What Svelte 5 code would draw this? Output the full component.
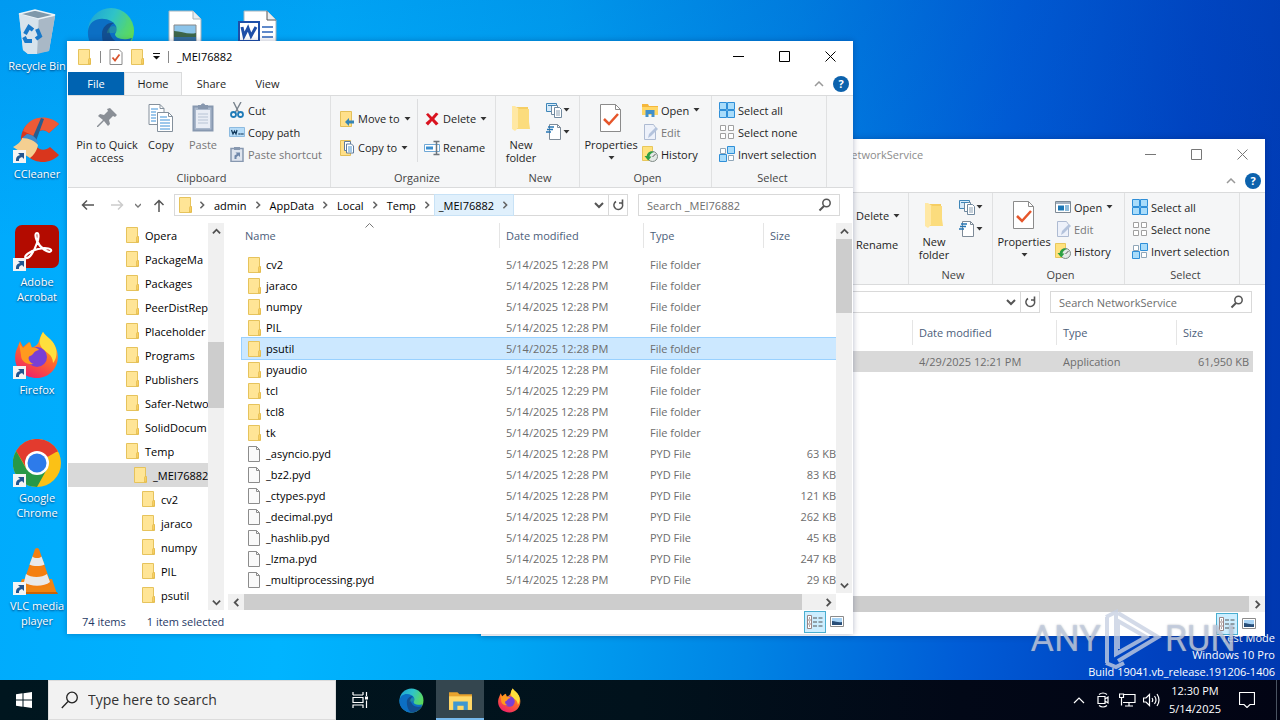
<script>
  const shortcuts = [
    { icon: 'bin', label: 'Recycle Bin', badge: false },
    { icon: 'ccleaner', label: 'CCleaner', badge: true },
    { icon: 'acrobat', label: 'Adobe Acrobat', badge: true },
    { icon: 'firefox', label: 'Firefox', badge: true },
    { icon: 'chrome', label: 'Google Chrome', badge: true },
    { icon: 'vlc', label: 'VLC media player', badge: true }
  ];
  const tree = [
    ['Opera', 0], ['PackageMa', 0], ['Packages', 0], ['PeerDistRep', 0],
    ['Placeholder', 0], ['Programs', 0], ['Publishers', 0], ['Safer-Netwo', 0],
    ['SolidDocum', 0], ['Temp', 0], ['_MEI76882', 1], ['cv2', 2], ['jaraco', 2],
    ['numpy', 2], ['PIL', 2], ['psutil', 2]
  ];
  const d28 = '5/14/2025 12:28 PM';
  const d29 = '5/14/2025 12:29 PM';
  const folder = (name, date = d28) => ({ name, date, type: 'File folder', size: '', icon: 'folder' });
  const pyd = (name, size) => ({ name, date: d28, type: 'PYD File', size, icon: 'file' });
  const mainFiles = [
    folder('cv2'), folder('jaraco'), folder('numpy'), folder('PIL'), folder('psutil'),
    folder('pyaudio'), folder('tcl', d29), folder('tcl8'), folder('tk', d29),
    pyd('_asyncio.pyd', '63 KB'), pyd('_bz2.pyd', '83 KB'), pyd('_ctypes.pyd', '121 KB'),
    pyd('_decimal.pyd', '262 KB'), pyd('_hashlib.pyd', '45 KB'), pyd('_lzma.pyd', '247 KB'),
    pyd('_multiprocessing.pyd', '29 KB'), { name: '', date: '', type: '', size: '', icon: 'file' }
  ];
  const backFiles = [{ name: '', date: '4/29/2025 12:21 PM', type: 'Application', size: '61,950 KB', icon: '' }];
  const crumbs = ['admin', 'AppData', 'Local', 'Temp', '_MEI76882'];
</script>

{#snippet icon(name)}
  {#if name === 'folder'}
    <svg width="14" height="16" viewBox="0 0 14 16"><path d="M.5.5h11v9h1v6H.5z" fill="#ffe596" stroke="#e6c35c" /><path d="M10.500 15V10.500l1-1.500 1 1.500V15z" fill="#f8cf62" stroke="#dfb544" stroke-width=".6" /></svg>
  {:else if name === 'file'}
    <svg width="14" height="16" viewBox="0 0 14 16"><path d="M.5.5h8l3 3v12H.5z" fill="#fafafa" stroke="#8c8c8c" /><path d="M8.500.5v3h3" fill="none" stroke="#8c8c8c" /></svg>
  {:else if name === 'propsmall'}
    <svg width="14" height="16" viewBox="0 0 14 16"><path d="M1 .5h9l3 3v12H1z" fill="#fff" stroke="#8a8a8a" /><path d="m3.500 8.500 2.500 3 4.500-6" fill="none" stroke="#d9532c" stroke-width="1.800" /></svg>
  {:else if name === 'caret'}
    <svg class="caret" width="7" height="4" viewBox="0 0 7 4"><path d="M.5 0h6l-3 3.500z" fill="#333" /></svg>
  {:else if name === 'pin'}
    <svg width="24" height="32" viewBox="0 0 24 32"><path d="M15 6l7 7-2 2-2-1-4 4 1 4-2 2-4-5-6 6-1 0 0-1 6-6-5-4 2-2 4 1 4-4-1-2z" fill="#8a8f96" /></svg>
  {:else if name === 'copy'}
    <svg width="26" height="32" viewBox="0 0 26 32"><g fill="#fff" stroke="#84909c"><path d="M1 2.500h11l4 4v16H1z" /><path d="M9.500 10.500h11l4 4v15h-15z" /><path d="M12 2.500v4h4M20.500 10.500v4h4" fill="none" /></g><path d="M3 7h7M3 10h5M3 13h5M3 16h5M3 19h5M12 15h7M12 18h10M12 21h10M12 24h10M12 27h10" stroke="#3c91d8" /></svg>
  {:else if name === 'paste'}
    <svg width="22" height="32" viewBox="0 0 22 32"><path d="M1.500 4.500h19v24h-19z" fill="#aab8cc" stroke="#8798b0" stroke-width="2" /><path d="M4 8h14v18H4z" fill="#e9edf5" /><path d="M6 3h3c0-2 4-2 4 0h3v4H6z" fill="#8797ae" /><path d="M6 12h10M6 15h10M6 18h10M6 21h10" stroke="#b7c3d4" /></svg>
  {:else if name === 'cut'}
    <svg width="16" height="16" viewBox="0 0 16 16"><path d="m4.500 0 5.500 11M12 0 6 11" stroke="#78838d" stroke-width="1.400" /><g fill="none" stroke="#1f7bb8" stroke-width="1.800"><circle cx="4.500" cy="12.500" r="2.500" /><circle cx="11.500" cy="12.500" r="2.500" /></g></svg>
  {:else if name === 'path'}
    <svg width="16" height="16" viewBox="0 0 16 16"><path d="M.5 3.500h15v9H.5z" fill="#b6dcf8" stroke="#8dbbe0" /><path d="m2.500 6 1.500 4L5.500 7 7 10l1-4" fill="none" stroke="#12395c" stroke-width="1.200" /><path d="M9.500 10h1.200M11.500 10h1.200M13.300 10h1.200" stroke="#12395c" stroke-width="1.500" /></svg>
  {:else if name === 'pasteshort'}
    <svg width="16" height="16" viewBox="0 0 16 16"><path d="M2 2.500h12v13H2z" fill="#dfe5ef" stroke="#8798b0" stroke-width="1.500" /><path d="M5 1h6v3H5z" fill="#8798b0" /><path d="M5.500 13V9.500L8 8 6.500 6.500H11V11L9.500 9.500 7.500 11v2z" fill="#6f87aa" /></svg>
  {:else if name === 'moveto'}
    <svg width="16" height="16" viewBox="0 0 16 16"><path d="M1.500.5h11v15h-11z" fill="#ffe08a" stroke="#e3bf58" /><path d="m6 11 4-4v2.500h5v3h-5V15z" fill="#3685b5" /></svg>
  {:else if name === 'copyto'}
    <svg width="16" height="16" viewBox="0 0 16 16"><path d="M1.500.5h10v15h-10z" fill="#ffe08a" stroke="#e3bf58" /><g fill="#fff" stroke="#607c9c"><path d="M5.500 1.500h6v9h-6z" /><path d="M7.500 4h5l2 2v7h-7z" /></g><path d="M9 7h4M9 9h4M9 11h4" stroke="#4a93cf" /></svg>
  {:else if name === 'delete'}
    <svg width="16" height="16" viewBox="0 0 16 16"><path d="M2 3.500 4 2l4 4 4-4.500L14.500 3l-4.300 5 4.300 4.500L12 14.500 8 10l-4 4.500L1.500 12 6 8z" fill="#d9131f" /></svg>
  {:else if name === 'rename'}
    <svg width="16" height="16" viewBox="0 0 16 16"><path d="M.5 4.500h15v7H.5z" fill="#fff" stroke="#6fa8d6" /><path d="M2 6.500h7v3H2z" fill="#3b8fd0" /><path d="M9.500 1.500h6M12.500 1.500v13M9.500 14.500h6" stroke="#6d747b" stroke-width="1.500" /></svg>
  {:else if name === 'newfolder'}
    <svg width="22" height="32" viewBox="0 0 22 32"><path d="M3 5h15v22H5z" fill="#f6ce63" /><path d="M2 4h3l4 3v18l-4 4-3-2z" fill="#ffe8a4" /><path d="M8 7h11v13l1 7H8z" fill="#fbdc7d" /></svg>
  {:else if name === 'newitem'}
    <svg width="17" height="16" viewBox="0 0 17 16"><g fill="#fff" stroke="#70899f"><path d="M.5 1.500h10v8H.5z" fill="#d7ebfa" stroke="#3f86b8" /><path d="M5.500 3.500h6v9h-6z" /><path d="M8.500 5.500h5l2 2v8h-7z" /></g><path d="M2 3.500h7" stroke="#3f86b8" /><path d="M10 9h4M10 11h4M10 13h4" stroke="#8ba0b2" /></svg>
  {:else if name === 'easy'}
    <svg width="17" height="16" viewBox="0 0 17 16"><path d="M3.500.5h8l3 3v12h-11z" fill="#fff" stroke="#7e8b98" /><path d="M11.500.5v3h3" fill="none" stroke="#7e8b98" /><path d="M2 3h6M1 5.500h6M0 8h5" stroke="#2777b5" stroke-width="1.400" /></svg>
  {:else if name === 'properties'}
    <svg width="24" height="32" viewBox="0 0 24 32"><path d="M1.500 2.500h15l5 5v22h-20z" fill="#fff" stroke="#8b8b8b" /><path d="M16.500 2.500v5h5" fill="none" stroke="#8b8b8b" /><path d="m5 17 5 5 9-10" fill="none" stroke="#e6562b" stroke-width="2.500" /></svg>
  {:else if name === 'open'}
    <svg width="16" height="16" viewBox="0 0 16 16"><path d="M0 2h6l1 2h9v9H0z" fill="#f5b73c" /><path d="M0 5h16v8H0z" fill="#ffd766" /><path d="M3.500 8h9v7h-3v-3h-3v3h-3z" fill="#418fcb" /></svg>
  {:else if name === 'openapp'}
    <svg width="16" height="16" viewBox="0 0 16 16"><path d="M.5 2.500h15v11H.5z" fill="#fff" stroke="#7d8994" /><path d="M1 3h14v2H1z" fill="#a6b4c2" /><path d="M3 6.500h6v5H3z" fill="#1c78b6" /><path d="M10 7h4M10 9h4M10 11h4" stroke="#1c78b6" /></svg>
  {:else if name === 'edit'}
    <svg width="16" height="16" viewBox="0 0 16 16"><path d="M2.500.5h9l2 3v12h-11z" fill="#edf1fa" stroke="#aebbd2" /><path d="m6 14 1-4 7-7 2 2-7 7z" fill="#b4c3dc" /></svg>
  {:else if name === 'history'}
    <svg width="16" height="16" viewBox="0 0 16 16"><path d="M.5.5h10v14H.5z" fill="#ffe27e" stroke="#e8c75c" /><circle cx="10.500" cy="10.500" r="5" fill="#e4e9e6" stroke="#7f8a86" /><path d="M12 6c-4-1.500-7 1-7.300 4H2.500l3.700 4.500 3.300-4H7.500c.3-2 2-3.800 4.500-4.500z" fill="#2da043" /><path d="m10.500 11 3-3" stroke="#555" /></svg>
  {:else if name === 'selall'}
    <svg width="16" height="16" viewBox="0 0 16 16"><g fill="#a9dcfa" stroke="#2f8fd8"><path d="M.5.5h7v7h-7zM8.500.5h7v7h-7zM.5 8.500h7v7h-7zM8.500 8.500h7v7h-7z" /></g></svg>
  {:else if name === 'selnone'}
    <svg width="16" height="16" viewBox="0 0 16 16"><path d="M1.500 1.500h5v5h-5zM9.500 1.500h5v5h-5zM1.500 9.500h5v5h-5zM9.500 9.500h5v5h-5z" fill="#fff" stroke="#a0a0a0" /></svg>
  {:else if name === 'selinv'}
    <svg width="16" height="16" viewBox="0 0 16 16"><path d="M1.500 2.500h5v5h-5zM9.500 9.500h5v5h-5z" fill="#fff" stroke="#8fa6b8" /><path d="M8.500.5h7v7h-7zM.5 8.500h7v7h-7z" fill="#a9dcfa" stroke="#2f8fd8" /></svg>
  {:else if name === 'edge'}
    <svg viewBox="0 0 48 48"><circle cx="24" cy="24" r="23" fill="url(#edgeTop)" /><path d="M1 24C2 12 15 9 24 14c6 3 7 9 4 13 0 4 7 7 17 4C39 44 27 50 16 46 6 42 0 34 1 24z" fill="#0c6fc4" /><path d="M15 27c0-7 6-12 12-11-5 2-6 8-3 13 4 8 14 9 21 5-6 11-17 14-23 12-5-4-7-12-7-19z" fill="#124f91" /><path d="M20 27c0-5 3-8 7-8 4 1 4 6 1 8 0 4 8 6 17 3 4-13-5-22-11-25 9 7 6 20-8 21-3 0-6-1-6 1z" fill="#54d870" opacity=".25" /></svg>
  {:else if name === 'firefox'}
    <svg viewBox="0 0 48 48"><path d="M30 1c3 5 9 7 12 14 8 15-2 32-18 32C9 47-1 35 3 20l4-10 3 6 6-5 2 6c3-1 7-3 8-7 1-3 2-6 4-9z" fill="url(#foxBody)" /><path d="M30 1c3 5 9 7 12 14 3 7 1 14-2 17 0-9-8-11-11-15-4-5-2-11 1-16z" fill="#ffdf3c" /><circle cx="24" cy="26" r="10" fill="#7a3fd4" /><path d="M6 12l4 5 7-6 2 6c2-1 6 0 7 2-6 1-5 5-9 6-3 1-1 7 4 8-8 1-13-3-13-9z" fill="#ff9a1f" /></svg>
  {:else if name === 'bin'}
    <svg viewBox="0 0 48 48"><path d="m6 7 36 2-6 35-21 3-5-4z" fill="#c7d6e2" /><path d="m26 11 16-2-6 35-12 3z" fill="#a9b8c6" /><path d="m6 7 16-4 20 5-17 4z" fill="#7f98aa" stroke="#edf4f8" stroke-width="1.500" /><path d="m6 7 19 5-1 35-9 0-5-4z" fill="#d7e3ec" /><g fill="none" stroke="#1979c9" stroke-width="4"><path d="m12 27 4-7 4 3M24 22l3 7-4 3M19 34h-6l-2-4" /></g></svg>
  {:else if name === 'ccleaner'}
    <svg viewBox="0 0 48 48"><path d="M46 9 36 18c-6-6-15-1-15 7s9 13 16 7l9 8C33 54 8 46 8 25S32-3 46 9z" fill="#d9361d" /><path d="M46 9 36 18c-6-6-13-2-15 3L10 16C16 0 36-1 46 9z" fill="#ee5a36" /><path d="m28 3 3 1-8 22-4-2z" fill="#275d8f" /><path d="M14 19c5 0 10 4 11 9l-7 3-9-8z" fill="#3b8bcf" /><path d="M9 23c7 0 13 3 16 7-1 6-5 11-8 13L0 32c4-2 8-5 9-9z" fill="#f4cf91" /></svg>
  {:else if name === 'acrobat'}
    <svg viewBox="0 0 48 48"><rect x="2" y="2" width="44" height="43" rx="7" fill="#b30b00" /><path d="M13 35c-3-1 3-7 12-9 9-2 14 0 13 2-2 3-11-3-14-10-2-4-2-8 0-8s2 5 0 10c-3 9-8 16-11 15z" fill="none" stroke="#fff" stroke-width="2.200" /></svg>
  {:else if name === 'chrome'}
    <svg viewBox="0 0 48 48"><circle cx="24" cy="24" r="24" fill="#fbc116" /><path d="M24 24 3.200 12A24 24 0 0 1 44.800 12z" fill="#e33b2e" /><path d="M24 13h20.800A24 24 0 0 0 3.200 12L14 30z" fill="#e33b2e" /><path d="M3.200 12A24 24 0 0 0 24 48l10-18-20 1z" fill="#279847" /><circle cx="24" cy="24" r="12" fill="#fff" /><circle cx="24" cy="24" r="9.500" fill="#2d7bea" /></svg>
  {:else if name === 'vlc'}
    <svg viewBox="0 0 48 48"><path d="M9 32h30l5 15H3z" fill="#f08412" /><path d="M3 45h41l1 2H2z" fill="#cc6305" /><path d="M22 2q2-2 4 0l12 35c-4 5-24 5-28 0z" fill="#f47f10" /><path d="m19.500 9.500-3 8c4 2 11 2 15 0l-3-8c-2 2-7 2-9 0zM13 27l-2 8c6 5 20 5 26 0l-3-8c-5 4-16 4-21 0z" fill="#e9e9e9" /></svg>
  {:else if name === 'details'}
    <svg width="16" height="14" viewBox="0 0 16 14"><path d="M.5.5h4v13h-4zM.5 5h4M.5 9h4" fill="#fff" stroke="#9a8484" /><path d="M6 3h4M11.500 3h4M6 7h4M11.500 7h4M6 11h4M11.500 11h4M2 3h1M2 7h1M2 11h1" stroke="#555" /></svg>
  {:else if name === 'thumbs'}
    <svg width="14" height="11" viewBox="0 0 14 11"><path d="M.5.5h13v10H.5z" fill="#fff" stroke="#8b8b8b" /><path d="M2 2h10v7H2z" fill="#a7d3f5" /><path d="M2 5c4 0 6 2 10 1v3H2z" fill="#284e78" /></svg>
  {:else if name === 'magnify'}
    <svg width="14" height="14" viewBox="0 0 14 14"><circle cx="8.500" cy="5" r="3.700" fill="none" stroke="#555" stroke-width="1.500" /><path d="M6 8 1.500 12.500" stroke="#555" stroke-width="2" /></svg>
  {/if}
{/snippet}

{#snippet chev(dir)}
  <svg class="chev {dir}" width="10" height="10" viewBox="0 0 10 10"><path d="m1 3 4 4 4-4" fill="none" stroke="currentColor" stroke-width="2" /></svg>
{/snippet}

{#snippet small(ic, label, caret, off)}
  <button class="small" class:off>{@render icon(ic)}<span>{label}</span>{#if caret}{@render icon('caret')}{/if}</button>
{/snippet}

{#snippet big(ic, label, cls)}
  <button class="big {cls}">{@render icon(ic)}<span>{label}</span></button>
{/snippet}

{#snippet ribbonEnd(app)}
  <section class="group new">
    <div class="tools">
      {@render big('newfolder', 'New folder', 'w-copy')}
      <div class="stack">
        <button class="small tight" aria-label="New item">{@render icon('newitem')}{@render icon('caret')}</button>
        <button class="small tight" aria-label="Easy access">{@render icon('easy')}{@render icon('caret')}</button>
      </div>
    </div>
    <h2>New</h2>
  </section>
  <section class="group opening">
    <div class="tools">
      <button class="big w-prop">{@render icon('properties')}<span>Properties</span>{@render icon('caret')}</button>
      <div class="stack">
        {@render small(app ? 'openapp' : 'open', 'Open', true)}
        {@render small('edit', 'Edit', false, true)}
        {@render small('history', 'History')}
      </div>
    </div>
    <h2>Open</h2>
  </section>
  <section class="group select">
    <div class="tools">
      <div class="stack">
        {@render small('selall', 'Select all')}
        {@render small('selnone', 'Select none')}
        {@render small('selinv', 'Invert selection')}
      </div>
    </div>
    <h2>Select</h2>
  </section>
{/snippet}

{#snippet tabEnd()}
  <span class="grow"></span>
  <button class="fold" aria-label="Minimize the Ribbon"><svg width="10" height="6" viewBox="0 0 10 6"><path d="m1 5 4-4 4 4" fill="none" stroke="#999" stroke-width="1.500" /></svg></button>
  <button class="help" aria-label="Help">?</button>
{/snippet}

{#snippet controls()}
  <div class="controls">
    <button aria-label="Minimize"><svg width="11" height="11" viewBox="0 0 11 11"><path d="M0 5.500h11" stroke="currentColor" /></svg></button>
    <button aria-label="Maximize"><svg width="11" height="11" viewBox="0 0 11 11"><path d="M.5.5h10v10H.5z" fill="none" stroke="currentColor" /></svg></button>
    <button aria-label="Close"><svg width="11" height="11" viewBox="0 0 11 11"><path d="m.5.5 10 10M10.500.5l-10 10" stroke="currentColor" /></svg></button>
  </div>
{/snippet}

{#snippet address(parts, hint)}
  <div class="address">
    <div class="arrows">
      <button aria-label="Back" class="prev"><svg width="13" height="12" viewBox="0 0 13 12"><path d="M13 6H1.500M6 1.500 1.500 6 6 10.500" fill="none" stroke="#555" stroke-width="1.500" /></svg></button>
      <button aria-label="Forward"><svg width="13" height="12" viewBox="0 0 13 12"><path d="M0 6h11.500M7 1.500 11.500 6 7 10.500" fill="none" stroke="#ccc" stroke-width="1.500" /></svg></button>
      <button aria-label="Recent locations" class="recent"><svg width="6" height="5" viewBox="0 0 6 5"><path d="m0 1 3 3 3-3" fill="none" stroke="#777" stroke-width="1.300" /></svg></button>
      <button aria-label="Up"><svg width="12" height="13" viewBox="0 0 12 13"><path d="M6 13V1.500M1.500 6 6 1.500 10.500 6" fill="none" stroke="#555" stroke-width="1.500" /></svg></button>
    </div>
    <div class="path">
      {#if parts.length}
        <span class="root">{@render icon('folder')}</span>
        <span class="sep">{@render chev('right')}</span>
      {/if}
      {#each parts as part, i}
        <button class="crumb" class:last={i === parts.length - 1}>{part}<span class="sep">{@render chev('right')}</span></button>
      {/each}
      <span class="grow"></span>
      <button class="drop" aria-label="Previous locations">{@render chev('down')}</button>
      <button class="reload" aria-label="Refresh"><svg width="11" height="12" viewBox="0 0 11 12"><path d="M3 2.500A4.300 4.300 0 1 0 9 4M6 4h3.500V.5" fill="none" stroke="#555" stroke-width="1.600" /></svg></button>
    </div>
    <label class="find"><input type="text" placeholder={hint} aria-label={hint} />{@render icon('magnify')}</label>
  </div>
{/snippet}

{#snippet listing(files, selected, first)}
  <table>
    <colgroup><col /><col class="c-date" /><col class="c-type" /><col class="c-size" /></colgroup>
    <thead><tr><th><div>{first}</div></th><th><div>Date modified</div></th><th><div>Type</div></th><th><div>Size</div></th></tr></thead>
    <tbody>
      {#each files as f, i}
        <tr class:selected={i === selected}>
          <td><span class="name">{#if f.icon}{@render icon(f.icon)}{/if}{f.name}</span></td>
          <td>{f.date}</td><td>{f.type}</td><td class="size">{f.size}</td>
        </tr>
      {/each}
    </tbody>
  </table>
{/snippet}

{#snippet views()}
  <div class="views">
    <button class="on" aria-label="Details">{@render icon('details')}</button>
    <button aria-label="Large icons">{@render icon('thumbs')}</button>
  </div>
{/snippet}

<svg class="defs" width="0" height="0" aria-hidden="true">
  <defs>
    <linearGradient id="edgeTop" x1="0" y1="0" x2="1" y2=".5"><stop offset="0" stop-color="#1aa0d8" /><stop offset=".5" stop-color="#2fc3c8" /><stop offset="1" stop-color="#5fdc55" /></linearGradient>
    <linearGradient id="foxBody" x1=".8" y1="0" x2=".3" y2="1"><stop offset="0" stop-color="#ffc42e" /><stop offset=".5" stop-color="#ff6a2a" /><stop offset="1" stop-color="#f0206a" /></linearGradient>
  </defs>
</svg>

<div class="screen">
  <main class="desktop">
    <div class="icons">
      <div class="column">
        {#each shortcuts as s}
          <button class="shortcut">
            <span class="pic">{@render icon(s.icon)}{#if s.badge}<svg class="badge" width="13" height="13" viewBox="0 0 13 13"><path d="M0 0h13v13H0z" fill="#f4f4f4" /><path d="M3 11c0-4 1-5 4-6L5 3h6v6L9 7c-3 1-3 2-3 4z" fill="#22558f" /></svg>{/if}</span>
            <span class="label">{s.label}</span>
          </button>
        {/each}
      </div>
      <div class="column"><button class="shortcut" aria-label="Edge"><span class="pic">{@render icon('edge')}</span></button></div>
      <div class="column"><button class="shortcut" aria-label="Picture"><span class="pic"><svg viewBox="0 0 48 48"><path d="M8 4h24l8 8v34H8z" fill="#fff" stroke="#a8b4bc" /><path d="M32 4v8h8" fill="#e8edf0" stroke="#a8b4bc" /><path d="M13 18h22v17H13z" fill="#8cc4ea" stroke="#888" /><path d="M13 24c7 0 14 4 22 2v4H13z" fill="#3e6549" /><path d="M13 30h22v5H13z" fill="#356d9c" /></svg></span></button></div>
      <div class="column"><button class="shortcut" aria-label="Document"><span class="pic"><svg viewBox="0 0 48 48"><path d="M9 4h23l9 9v33H9z" fill="#fff" stroke="#a8b4bc" /><path d="M32 4v9h9" fill="#e8edf0" stroke="#555" /><path d="M27 20h11M27 25h11M27 30h11" stroke="#2b63b8" stroke-width="1.500" /><path d="M4 15h20v19H4z" fill="#fff" stroke="#1e4fa8" stroke-width="2" /><path d="m7 20 2 9 4-8 3 8 5-9" fill="none" stroke="#1e4fa8" stroke-width="3" /></svg></span></button></div>
    </div>

    <div class="build"><span>Test Mode</span><span>Windows 10 Pro</span><span>Build 19041.vb_release.191206-1406</span></div>

    <article class="window back">
      <header class="title"><span class="grow"></span><h1>NetworkService</h1>{@render controls()}</header>
      <div class="tabs">{@render tabEnd()}</div>
      <div class="ribbon">
        <section class="group rest">
          <div class="tools">
            <div class="stack tall">
              {@render small('delete', 'Delete', true)}
              {@render small('rename', 'Rename')}
            </div>
          </div>
        </section>
        {@render ribbonEnd(true)}
      </div>
      {@render address([], 'Search NetworkService')}
      <div class="body">
        <div class="nav"></div>
        <div class="list">
          <div class="view-area">{@render listing(backFiles, 0, '')}</div>
          <div class="hbar"><span class="arrow">{@render chev('left')}</span><span class="thumb"></span><span class="arrow">{@render chev('right')}</span></div>
        </div>
      </div>
      <footer class="status"><span class="grow"></span>{@render views()}</footer>
    </article>

    <article class="window front">
      <header class="title">
        <span class="quick">{@render icon('folder')}<i></i>{@render icon('propsmall')}{@render icon('folder')}<svg width="7" height="7" viewBox="0 0 7 7"><path d="M0 .5h7" stroke="#111" /><path d="M0 3h7L3.500 6.500z" fill="#111" /></svg><i></i></span>
        <h1>_MEI76882</h1>
        {@render controls()}
      </header>
      <div class="tabs">
        <button class="tab file">File</button>
        <button class="tab home">Home</button>
        <button class="tab share">Share</button>
        <button class="tab view">View</button>
        {@render tabEnd()}
      </div>
      <div class="ribbon">
        <section class="group clip">
          <div class="tools">
            {@render big('pin', 'Pin to Quick access', 'w-pin')}
            {@render big('copy', 'Copy', 'w-copy')}
            {@render big('paste', 'Paste', 'w-paste off')}
            <div class="stack">
              {@render small('cut', 'Cut')}
              {@render small('path', 'Copy path')}
              {@render small('pasteshort', 'Paste shortcut', false, true)}
            </div>
          </div>
          <h2>Clipboard</h2>
        </section>
        <section class="group organize">
          <div class="tools">
            <div class="stack tall">
              {@render small('moveto', 'Move to', true)}
              {@render small('copyto', 'Copy to', true)}
            </div>
            <div class="stack tall divided">
              {@render small('delete', 'Delete', true)}
              {@render small('rename', 'Rename')}
            </div>
          </div>
          <h2>Organize</h2>
        </section>
        {@render ribbonEnd(false)}
      </div>
      {@render address(crumbs, 'Search _MEI76882')}
      <div class="body">
        <nav class="nav">
          <ul>
            {#each tree as [name, level]}
              <li class="l{level}" class:current={name === '_MEI76882'}>{@render icon('folder')}<span>{name}</span></li>
            {/each}
          </ul>
          <div class="vbar"><span class="arrow">{@render chev('up')}</span><span class="track nav-track"><span class="thumb"></span></span><span class="arrow">{@render chev('down')}</span></div>
        </nav>
        <div class="list">
          <div class="view-row">
            <div class="view-area">
              {@render listing(mainFiles, 4, 'Name')}
              <svg class="sort" width="9" height="5" viewBox="0 0 9 5"><path d="m.5 4.500 4-4 4 4" fill="none" stroke="#777" /></svg>
            </div>
            <div class="vbar"><span class="arrow">{@render chev('up')}</span><span class="track list-track"><span class="thumb"></span></span><span class="arrow">{@render chev('down')}</span></div>
          </div>
          <div class="hbar"><span class="arrow">{@render chev('left')}</span><span class="thumb"></span><span class="rest"></span><span class="arrow">{@render chev('right')}</span></div>
        </div>
      </div>
      <footer class="status"><span>74 items</span><span>1 item selected</span><span class="grow"></span>{@render views()}</footer>
    </article>

    <div class="watermark">
      <span>ANY</span>
      <svg width="58" height="62" viewBox="0 0 58 62"><path d="M14 5 54 29 14 53M3 9v46M2 9l10-5v42l30-17L14 13v28M2 55l10 4 8-4" fill="none" stroke="currentColor" stroke-width="4" /></svg>
      <span>RUN</span>
    </div>
  </main>

  <footer class="taskbar">
    <button class="start" aria-label="Start"><svg width="16" height="16" viewBox="0 0 16 16"><path d="M0 2.200 6.500 1.300v6.200H0zM7.500 1.200 16 0v7.500H7.500zM0 8.500h6.500v6.200L0 13.800zM7.500 8.500H16V16l-8.500-1.200z" fill="#fff" /></svg></button>
    <label class="search"><svg width="18" height="18" viewBox="0 0 18 18"><circle cx="11" cy="6.500" r="5.300" fill="none" stroke="#222" stroke-width="1.300" /><path d="M7 10.500.8 17" stroke="#222" stroke-width="1.300" /></svg><input type="text" placeholder="Type here to search" aria-label="Type here to search" /></label>
    <button class="task view-task" aria-label="Task View"><svg width="17" height="16" viewBox="0 0 17 16"><path d="M1 0v3M11 0v3M1 3h10M1 5.500h10v5H1zM1 16v-3h10v3M14.500 0v4M14.500 8.500V16" fill="none" stroke="#fff" stroke-width="1.200" /><path d="M13 4.500h3v3h-3z" fill="#fff" /></svg></button>
    <button class="task" aria-label="Edge">{@render icon('edge')}</button>
    <button class="task active" aria-label="File Explorer"><svg viewBox="0 0 24 24"><path d="M1 4h8l2 2h12v15H1z" fill="#e8a32d" /><path d="M1 8h22v13H1z" fill="#ffd868" /><path d="M5 13h14v8h-4v-4H9v4H5z" fill="#3f97d0" /></svg></button>
    <button class="task" aria-label="Firefox">{@render icon('firefox')}</button>
    <span class="grow"></span>
    <div class="tray">
      <button aria-label="Show hidden icons"><svg width="12" height="7" viewBox="0 0 12 7"><path d="m1 6 5-5 5 5" fill="none" stroke="#fff" stroke-width="1.200" /></svg></button>
      <button aria-label="Meet Now"><svg width="12" height="16" viewBox="0 0 12 16"><path d="M1 4.500h7v7H1zM8 7l3-2v6L8 9M2 2.500q4-3 8 0M2 13.500q4 3 8 0" fill="none" stroke="#fff" stroke-width="1.200" /></svg></button>
      <button aria-label="Network"><svg width="17" height="14" viewBox="0 0 17 14"><path d="M5 1.500h11v8H4M10 9.500V13M6 13h8M.5 1h4v3.500h-4zM2.500 5v7.500" fill="none" stroke="#fff" stroke-width="1.200" /></svg></button>
      <button aria-label="Volume"><svg width="17" height="14" viewBox="0 0 17 14"><path d="M.5 5h2.500l3.500-3.500v11L3 9H.5zM9 5q1.500 2 0 4M11.500 3q3 4 0 8M14 1q4 6 0 12" fill="none" stroke="#fff" stroke-width="1.200" /></svg></button>
    </div>
    <div class="clock"><span>12:30 PM</span><span>5/14/2025</span></div>
    <button class="notes" aria-label="Notifications"><svg width="16" height="16" viewBox="0 0 16 16"><path d="M.5.5h15v12H11L8 15.500 5 12.500H.5z" fill="none" stroke="#fff" stroke-width="1.200" /></svg></button>
  </footer>
</div>

<style>
  :global(body) { margin: 0; }
  .defs { position: absolute; }
  .screen { display: flex; flex-direction: column; height: 100vh; min-height: 480px; overflow: hidden; font: 11px/15px "Open Sans", "Noto Sans", sans-serif; color: #1e1e1e; }
  .screen * { box-sizing: border-box; }
  button { font: inherit; color: inherit; background: none; border: 0; padding: 0; margin: 0; }
  input { font: inherit; color: inherit; background: none; border: 0; padding: 0; margin: 0; min-width: 0; outline: 0; }
  h1, h2, ul { margin: 0; padding: 0; font: inherit; list-style: none; }
  svg { display: block; flex: none; }
  .grow { flex: 1; }

  .desktop { position: relative; flex: 1; min-height: 0; background: linear-gradient(180deg, rgba(0, 80, 190, .18), rgba(0, 80, 190, 0) 35%), linear-gradient(95deg, #00aafc 0, #00b4ff 25%, #00a6f4 42%, #0084e4 60%, #005cd6 76%, #0042c0 90%, #0038b0 100%); }
  .icons { display: flex; }
  .column { display: flex; flex-direction: column; width: 74px; }
  .shortcut { display: flex; flex-direction: column; align-items: center; height: 108px; padding: 7px 4px 0; color: #fff; }
  .column:first-child .shortcut { padding: 7px 0 0; }
  .pic { position: relative; width: 48px; height: 48px; margin-bottom: 3px; }
  .pic > :global(svg) { width: 48px; height: 48px; }
  .pic > .badge { position: absolute; left: 0; bottom: 0; width: 13px; height: 13px; }
  .label { padding: 0 6px; text-shadow: 0 1px 2px rgba(0, 30, 80, .8); }

  .build { position: absolute; right: 5px; bottom: 0; display: flex; flex-direction: column; text-align: right; line-height: 17px; color: #fff; }
  .watermark { position: absolute; right: 44px; bottom: 10px; display: flex; align-items: center; gap: 3px; font: 36px/60px "Liberation Sans Narrow", Roboto, sans-serif; color: rgba(198, 208, 226, .78); text-shadow: 0 0 2px rgba(90, 100, 120, .5); pointer-events: none; }

  .window { position: absolute; display: flex; flex-direction: column; background: #fff; box-shadow: 0 0 6px rgba(0, 20, 70, .3); }
  .front { left: 67px; top: 41px; bottom: 46px; width: min(786px, 100vw - 67px); padding-left: 1px; }
  .back { right: 15px; top: 139px; bottom: 44px; width: min(784px, 100vw - 15px); }
  .title { display: flex; align-items: center; height: 31px; flex: none; }
  .back .title { height: 30px; }
  .quick { display: flex; align-items: center; gap: 8px; width: 109px; padding-left: 10px; }
  .quick i { width: 1px; height: 12px; background: #888; }
  .title h1 { color: #000; }
  .front .title h1 { flex: 1; }
  .back .title h1 { width: 284px; color: #8c8c8c; }
  .controls { display: flex; }
  .controls button { width: 46px; height: 30px; display: grid; place-items: center; color: #000; }
  .back .controls button { color: #777; }

  .tabs { display: flex; height: 23px; flex: none; align-items: stretch; }
  .tab { text-align: center; }
  .file { width: 56px; background: #0063b1; color: #fff; }
  .home { width: 58px; background: #f5f6f7; box-shadow: inset 1px 1px #dadbdc, inset -1px 0 #dadbdc; }
  .share { width: 59px; }
  .view { width: 53px; }
  .fold { width: 20px; display: grid; place-items: center; }
  .help { align-self: center; width: 16px; height: 16px; margin: 0 4px; border-radius: 50%; background: #0c62ad; color: #fff; font-weight: 700; line-height: 16px; }

  .ribbon { display: flex; height: 93px; flex: none; background: #f5f6f7; border: solid #dadbdc; border-width: 1px 0; }
  .group { display: flex; flex-direction: column; border-right: 1px solid #e0e1e2; padding: 3px 0 2px; flex: none; }
  .group h2 { margin-top: auto; text-align: center; color: #444; }
  .clip { width: 263px; padding-left: 5px; }
  .organize { width: 165px; padding-left: 8px; }
  .rest { width: 428px; padding-left: 356px; }
  .new { width: 84px; padding-left: 5px; }
  .opening { width: 132px; padding-left: 4px; }
  .select { width: 115px; padding-left: 7px; }
  .tools { display: flex; }
  .big { display: flex; flex-direction: column; align-items: center; padding-top: 3px; line-height: 13px; text-align: center; }
  .big span { padding-top: 4px; }
  .big > :global(.caret) { margin-top: 5px; }
  .w-pin { width: 68px; }
  .w-copy { width: 40px; }
  .w-paste { width: 44px; }
  .w-prop { width: 54px; }
  .off { color: #777; }
  .stack { display: flex; flex-direction: column; padding-left: 4px; }
  .new .stack { padding-left: 5px; }
  .select .stack, .tall { padding-left: 0; }
  .small { display: flex; align-items: center; gap: 3px; height: 22px; white-space: nowrap; }
  .small > :global(.caret) { margin-left: 1px; }
  .new .tight { gap: 0; }
  .new .tight > :global(.caret) { margin-left: 0; }
  .tall { width: 78px; padding-top: 5px; }
  .tall .small { height: 29px; }
  .divided { border-left: 1px solid #dcdddf; padding-left: 6px; }

  .address { display: flex; align-items: center; height: 34px; flex: none; padding-right: 13px; }
  .arrows { display: flex; align-items: center; width: 106px; padding-left: 11px; gap: 6px; }
  .arrows button { width: 16px; display: grid; place-items: center; }
  .arrows .prev { margin-right: 8px; }
  .arrows .recent { width: 14px; }
  .path { display: flex; align-items: center; flex: 1; height: 22px; border: 1px solid #d9d9d9; min-width: 0; }
  .root { padding: 0 5px 0 4px; }
  .sep { display: inline-flex; align-items: center; }
  .sep > :global(svg) { width: 8px; height: 8px; color: #666; }
  .crumb { display: flex; align-items: center; gap: 7px; height: 20px; padding-left: 8px; color: #000; }
  .crumb.last { margin-left: 4px; padding: 0 4px; background: #e0f0fc; box-shadow: 0 0 0 1px #c8e2f6; }
  .drop { display: grid; place-items: center; width: 18px; color: #555; }
  .reload { width: 19px; height: 20px; display: grid; place-items: center; border-left: 1px solid #d9d9d9; }
  .find { display: flex; align-items: center; width: 202px; height: 22px; margin-left: 10px; padding: 0 7px 0 8px; border: 1px solid #d9d9d9; }
  .find input { flex: 1; }
  .find input::placeholder { color: #6d6d6d; opacity: 1; }
  .chev.right { transform: rotate(-90deg); }
  .chev.left { transform: rotate(90deg); }
  .chev.up { transform: rotate(180deg); }

  .body { display: flex; flex: 1; min-height: 0; padding-top: 1px; }
  .nav { display: flex; width: 156px; flex: none; margin-right: 4px; }
  .nav ul { flex: 1; min-width: 0; overflow: hidden; }
  .nav li { display: flex; align-items: center; gap: 5px; height: 24px; padding-left: 58px; white-space: nowrap; color: #000; }
  .nav li.l1 { padding-left: 66px; }
  .nav li.l2 { padding-left: 74px; }
  .nav .current { background: #d9d9d9; }
  .vbar { display: flex; flex-direction: column; width: 16px; flex: none; background: #f0f0f0; }
  .arrow { display: grid; place-items: center; width: 16px; height: 16px; color: #505050; flex: none; }
  .arrow > :global(svg) { width: 9px; height: 9px; }
  .track { display: flex; flex-direction: column; flex: 1; }
  .vbar .thumb { background: #cdcdcd; }
  .nav-track { padding-top: 103px; }
  .nav-track .thumb { height: 66px; }
  .list-track .thumb { height: 74px; }
  .list { display: flex; flex-direction: column; flex: 1; min-width: 0; }
  .view-row { display: flex; flex: 1; min-height: 0; padding-right: 1px; }
  .view-area { position: relative; flex: 1; min-width: 0; overflow: hidden; padding-left: 14px; }
  .back .view-area { padding-right: 12px; }
  .sort { position: absolute; left: 137px; top: 0; }
  .hbar { display: flex; height: 16px; flex: none; background: #f0f0f0; }
  .front .hbar { margin: 1px 17px 0 0; }
  .hbar .thumb { flex: 1; background: #cdcdcd; }
  .hbar .rest { width: 18px; padding: 0; }
  table { width: 100%; border-collapse: collapse; table-layout: fixed; }
  .c-date { width: 144px; }
  .c-type { width: 120px; }
  .c-size { width: 73px; }
  .back .c-size { width: 77px; }
  th { height: 31px; padding: 0; text-align: left; vertical-align: top; font-weight: 400; color: #4c607a; }
  th div { height: 25px; line-height: 25px; padding-left: 6px; border-left: 1px solid #e5e5e5; }
  th:first-child div { border-color: transparent; padding-left: 2px; }
  td { height: 21px; padding: 0 0 0 7px; line-height: 15px; color: #6d6d6d; white-space: nowrap; }
  td:first-child { padding-left: 6px; }
  td.size { text-align: right; padding: 0; }
  .back td.size { padding-right: 4px; }
  .name { display: flex; align-items: center; gap: 4px; height: 16px; color: #000; }
  .selected { background: #cce8ff; box-shadow: 0 0 0 1px #99d1ff; }
  .back .selected { background: #d9d9d9; box-shadow: none; }
  .status { display: flex; align-items: center; gap: 21px; height: 24px; flex: none; padding: 0 9px 1px 14px; color: #1f3a66; }
  .views { display: flex; align-items: center; gap: 4px; }
  .views button { display: grid; place-items: center; }
  .views .on { width: 22px; height: 22px; background: #cceeff; border: 1px solid #4aaed0; }

  .taskbar { display: flex; align-items: stretch; height: 40px; flex: none; color: #fff; background: linear-gradient(90deg, #00161f, #01121c 50%, #020817 75%, #020414); }
  .start { width: 48px; display: grid; place-items: center; }
  .search { display: flex; align-items: center; gap: 9px; width: 288px; padding-left: 12px; background: #f2f2f2; border: 1px solid #dcdcdc; color: #222; font-size: 14px; line-height: 20px; }
  .search input { flex: 1; }
  .search input::placeholder { color: #333; opacity: 1; }
  .task { width: 48px; margin-right: 1px; display: grid; place-items: center; }
  .task > :global(svg) { width: 25px; height: 25px; }
  .task.view-task { margin-right: 3px; }
  .task.view-task > :global(svg) { width: 17px; height: 16px; }
  .task.active { background: #34464f; box-shadow: inset 0 -2px #76b9ed; }
  .tray { display: flex; }
  .tray button { width: 24px; display: grid; place-items: center; }
  .clock { display: flex; flex-direction: column; justify-content: center; width: 64px; text-align: center; line-height: 18px; }
  .notes { width: 40px; margin-right: 9px; display: grid; place-items: center; }
  .taskbar::after { content: ""; width: 1px; margin-right: 3px; background: #4a5361; }
</style>
